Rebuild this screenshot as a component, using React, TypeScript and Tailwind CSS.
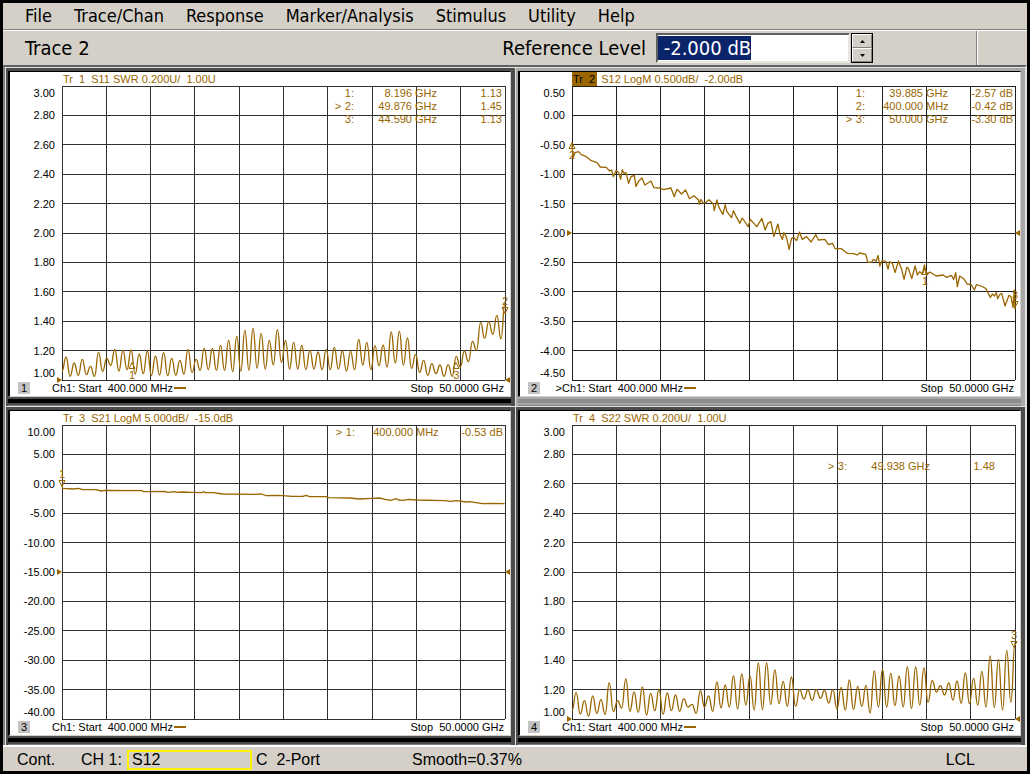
import React, { useEffect, useRef } from "react";

// plot coordinates: 10 x 10 divisions on a 1330 x 882 field
const PLOT_W = 1330;
const PLOT_H = 882;

type Readout = { active?: boolean; id: string; freq: string; unit: string; value: string };
type Pin = { id: string; x: number; y: number; below?: boolean };

type PaneData = {
  num: number;
  title: string;
  selected?: boolean;
  labels: string[];
  readouts: Readout[];
  readoutClass: string;
  pins: Pin[];
  refTop: number;
  path: string;
};

// alternating peaks and dips, as heights over the bottom line
const s11 = [
  26, 69, 11, 51, 14, 62, 16, 41, 11, 83, 26, 65, 44, 92, 27, 89, 31, 90, 18, 78, 19, 87, 14, 72, 15, 82, 13, 65, 14, 59,
  18, 92, 22, 62, 29, 95, 31, 95, 29, 104, 29, 119, 25, 131, 27, 149, 29, 155, 35, 140, 33, 119, 45, 151, 53, 119, 33,
  113, 33, 104, 31, 89, 33, 84, 31, 92, 31, 98, 33, 87, 27, 86, 31, 122, 45, 113, 31, 103, 43, 105, 39, 144, 51, 146,
  45, 126, 35, 77, 23, 59, 14, 49, 19, 45, 11, 46, 11, 71, 39, 87, 55, 116, 89, 173, 125, 175, 137, 194, 123, 231,
];

const s22 = [
  25, 79, 15, 55, 8, 69, 17, 58, 14, 109, 22, 55, 33, 120, 23, 81, 20, 96, 12, 77, 25, 88, 14, 78, 25, 72, 23, 61, 36,
  44, 17, 85, 36, 69, 23, 111, 34, 102, 36, 129, 30, 135, 42, 129, 27, 168, 28, 168, 44, 147, 46, 113, 38, 126, 38, 88,
  60, 87, 56, 88, 62, 86, 48, 88, 30, 95, 27, 117, 28, 98, 38, 101, 18, 144, 36, 149, 36, 137, 40, 129, 36, 156, 32,
  156, 42, 153, 50, 116, 81, 100, 72, 108, 57, 114, 47, 138, 46, 122, 42, 143, 36, 189, 34, 179, 27, 206, 50, 228,
];

const s12 =
  "M0 174L3 215L9 200L20 197L28 206L43 212L58 224L75 230L85 243L103 244L113 255L119 252L124 272L132 254L140 259L146 280L151 251L156 262L162 260L170 292L177 272L187 268L192 301L201 284L210 276L219 297L237 285L246 305L263 306L275 311L297 306L307 332L315 310L329 324L341 312L353 338L366 329L380 342L382 355L387 340L393 351L401 350L411 341L418 348L424 354L427 374L435 342L441 364L453 385L460 356L465 377L479 395L485 374L493 392L504 412L511 396L529 422L535 400L555 422L570 397L580 432L588 412L597 407L606 452L618 414L625 447L632 460L636 440L644 454L652 490L659 457L666 454L674 464L683 438L691 460L704 452L718 468L732 446L740 462L759 460L770 476L782 472L790 488L809 488L826 502L846 503L856 507L864 501L882 505L888 529L900 528L905 520L913 526L919 508L924 540L931 524L942 526L949 549L954 527L962 532L970 560L980 525L989 548L997 580L1005 544L1010 547L1020 578L1030 540L1037 567L1044 557L1052 564L1058 537L1064 567L1074 558L1094 570L1114 567L1124 574L1139 568L1146 580L1152 560L1157 602L1164 570L1176 578L1186 594L1198 596L1208 612L1214 596L1228 600L1242 607L1256 634L1262 624L1268 630L1274 620L1278 638L1284 626L1290 622L1300 660L1312 628L1318 632L1324 664L1328 612L1330 670";

const s21 =
  "M0 177L2 190L33 192L49 190L63 194L103 194L118 198L128 196L241 197L245 200L308 199L318 202L338 200L346 202L360 201L388 202L420 203L424 200L430 203L453 203L483 207L578 208L598 207L613 212L640 211L663 212L690 214L723 214L733 211L743 215L793 215L801 218L863 219L893 222L930 220L953 219L970 223L988 226L1003 221L1010 225L1023 226L1040 223L1063 225L1148 227L1168 229L1185 227L1213 231L1223 230L1243 233L1263 236L1290 235L1329 236";

function ripplePath(heights: number[]) {
  const step = PLOT_W / (heights.length - 1);
  let d = `M0 ${PLOT_H - heights[0]}`;
  for (let i = 1; i < heights.length; i++) {
    const x = i * step;
    const mid = x - step / 2;
    d += `C${mid} ${PLOT_H - heights[i - 1]} ${mid} ${PLOT_H - heights[i]} ${x} ${PLOT_H - heights[i]}`;
  }
  return d;
}

const swrLabels = ["3.00", "2.80", "2.60", "2.40", "2.20", "2.00", "1.80", "1.60", "1.40", "1.20", "1.00"];

const panes: PaneData[] = [
  {
    num: 1,
    title: "S11 SWR 0.200U/  1.00U",
    labels: swrLabels,
    readouts: [
      { id: "1:", freq: "8.196", unit: "GHz", value: "1.13" },
      { active: true, id: "2:", freq: "49.876", unit: "GHz", value: "1.45" },
      { id: "3:", freq: "44.590", unit: "GHz", value: "1.13" },
    ],
    readoutClass: "top-px right-[3px]",
    pins: [
      { id: "1", x: 15.8, y: 94, below: true },
      { id: "3", x: 89, y: 94, below: true },
      { id: "2", x: 100, y: 77.5 },
    ],
    refTop: 100,
    path: ripplePath(s11),
  },
  {
    num: 2,
    title: "S12 LogM 0.500dB/  -2.00dB",
    selected: true,
    labels: ["0.50", "0.00", "-0.50", "-1.00", "-1.50", "-2.00", "-2.50", "-3.00", "-3.50", "-4.00", "-4.50"],
    readouts: [
      { id: "1:", freq: "39.885", unit: "GHz", value: "-2.57 dB" },
      { id: "2:", freq: "400.000", unit: "MHz", value: "-0.42 dB" },
      { active: true, id: "3:", freq: "50.000", unit: "GHz", value: "-3.30 dB" },
    ],
    readoutClass: "top-px right-[2px]",
    pins: [
      { id: "2", x: 0, y: 19, below: true },
      { id: "1", x: 79.7, y: 62, below: true },
      { id: "3", x: 100, y: 75.5 },
    ],
    refTop: 50,
    path: s12,
  },
  {
    num: 3,
    title: "S21 LogM 5.000dB/  -15.0dB",
    labels: ["10.00", "5.00", "0.00", "-5.00", "-10.00", "-15.00", "-20.00", "-25.00", "-30.00", "-35.00", "-40.00"],
    readouts: [{ active: true, id: "1:", freq: "400.000", unit: "MHz", value: "-0.53 dB" }],
    readoutClass: "top-px right-[2px]",
    pins: [{ id: "1", x: 0, y: 21 }],
    refTop: 50,
    path: s21,
  },
  {
    num: 4,
    title: "S22 SWR 0.200U/  1.00U",
    labels: swrLabels,
    readouts: [{ active: true, id: "3:", freq: "49.938", unit: "GHz", value: "1.48" }],
    readoutClass: "top-[35px] right-5",
    pins: [{ id: "3", x: 99.8, y: 76 }],
    refTop: 100,
    path: ripplePath(s22),
  },
];

const menus = ["File", "Trace/Chan", "Response", "Marker/Analysis", "Stimulus", "Utility", "Help"];

function MarkerPin({ pin }: { pin: Pin }) {
  return (
    <div
      className={
        "absolute flex w-2 -translate-x-1/2 items-center " +
        (pin.below ? "flex-col" : "-translate-y-full flex-col-reverse")
      }
      style={{ left: `${pin.x}%`, top: `${pin.y}%` }}
    >
      <svg viewBox="0 0 8 7" className="h-[7px] w-2 shrink-0" fill="none" stroke="#996600">
        {pin.below ? <path d="M4 0.5L7 6.5H1Z" /> : <path d="M4 6.5L7 0.5H1Z" />}
      </svg>
      <span className="text-[11px] leading-3">{pin.id}</span>
    </div>
  );
}

function RefArrow({ side, top }: { side: "left" | "right"; top: number }) {
  return (
    <svg
      viewBox="0 0 5 6"
      className={"absolute h-[6px] w-[5px] -translate-y-1/2 " + (side === "left" ? "right-full" : "left-full")}
      style={{ top: `${top}%` }}
      fill="#996600"
    >
      {side === "left" ? <path d="M0 0L5 3L0 6Z" /> : <path d="M5 0L0 3L5 6Z" />}
    </svg>
  );
}

function Plot({ pane }: { pane: PaneData }) {
  const divisions = Array.from({ length: 11 }, (_, i) => i);
  return (
    <div className="relative flex min-w-0 flex-1 flex-col text-[#996600]">
      <svg
        viewBox={`0 0 ${PLOT_W} ${PLOT_H}`}
        preserveAspectRatio="none"
        className="h-0 min-h-[200px] w-full flex-1 overflow-visible"
        fill="none"
      >
        <g stroke={pane.selected ? "#202020" : "#303030"} shapeRendering="crispEdges">
          {divisions.map((i) => (
            <path
              key={i}
              d={`M${i * 133} 0V${PLOT_H}M0 ${i * 88.2}H${PLOT_W}`}
              vectorEffect="non-scaling-stroke"
            />
          ))}
        </g>
        <path
          d={pane.path}
          stroke="#996600"
          strokeWidth="1.3"
          strokeLinejoin="round"
          vectorEffect="non-scaling-stroke"
        />
      </svg>
      <table className={"absolute border-collapse text-[11px] leading-[13px] whitespace-nowrap " + pane.readoutClass}>
        <tbody>
          {pane.readouts.map((r) => (
            <tr key={r.id}>
              <td className="w-[10px] p-0">{r.active ? ">" : ""}</td>
              <td className="w-2 p-0 text-right">{r.id}</td>
              <td className="w-[58px] p-0 text-right">{r.freq}</td>
              <td className="w-[26px] p-0 pl-[3px]">{r.unit}</td>
              <td className="w-[64px] p-0 text-right">{r.value}</td>
            </tr>
          ))}
        </tbody>
      </table>
      {pane.pins.map((p) => (
        <MarkerPin key={p.id} pin={p} />
      ))}
      <RefArrow side="left" top={pane.refTop} />
      <RefArrow side="right" top={pane.refTop} />
    </div>
  );
}

function Pane({ pane }: { pane: PaneData }) {
  return (
    <section
      className={
        "flex min-w-0 flex-col border-t border-l border-t-[#e4e2dc] border-l-[#e4e2dc] pt-[3px] pr-1 pl-[2px] " +
        (pane.selected ? "bg-[#a8a8a8]" : "bg-[#4c4c4c]")
      }
    >
      <div className="flex flex-1 flex-col border-t border-r border-b border-l-2 border-t-black border-r-[#d4d0c8] border-b-[#d4d0c8] border-l-black bg-white text-[11px] text-black">
        <div className="flex h-[14px] pl-[52px] leading-[14px] whitespace-pre text-[#996600]">
          <span className={"mr-1 pr-[2px] pl-px " + (pane.selected ? "bg-[#996600] text-black" : "")}>
            {`Tr  ${pane.num}`}
          </span>
          <span>{pane.title}</span>
        </div>
        <div className="flex flex-1 pr-[5px]">
          <div className="flex w-[52px] flex-col justify-between pr-[7px] text-right leading-[14px]">
            {pane.labels.map((l, i) => (
              <div
                key={l}
                className={
                  "flex h-0 justify-end " + (i === 0 ? "items-start" : i === 10 ? "items-end" : "items-center")
                }
              >
                {l}
              </div>
            ))}
          </div>
          <Plot pane={pane} />
        </div>
        <div className="flex h-4 items-center pr-[6px] pl-2 whitespace-pre">
          <span className="h-3 w-3 bg-[#c4c4c4] text-center leading-3">{pane.num}</span>
          <span className="w-[22px] text-right">{pane.selected ? ">" : ""}</span>
          <span>{"Ch1: Start  400.000 MHz"}</span>
          <span className="ml-px h-[2px] w-3 bg-[#996600]" />
          <span className="ml-auto">{"Stop  50.0000 GHz"}</span>
        </div>
      </div>
      <div className="h-[9px] border-b border-b-[#808080] pt-[2px]">
        <div className={"h-1 " + (pane.selected ? "bg-[#8c8c8c]" : "bg-black")} />
      </div>
    </section>
  );
}

function SpinButton({ up }: { up?: boolean }) {
  return (
    <button
      type="button"
      aria-label={up ? "Increase" : "Decrease"}
      className="flex flex-1 items-center justify-center border border-t-white border-r-[#808080] border-b-[#808080] border-l-white bg-[#d4d0c8]"
    >
      <svg viewBox="0 0 5 3" className="h-[3px] w-[5px]" fill="#000">
        {up ? <path d="M2.5 0L5 3H0Z" /> : <path d="M0 0H5L2.5 3Z" />}
      </svg>
    </button>
  );
}

export default function App() {
  const levelRef = useRef<HTMLInputElement>(null);

  useEffect(() => {
    levelRef.current?.focus();
    levelRef.current?.select();
  }, []);

  return (
    <div className="flex min-h-screen flex-col bg-black p-[3px] font-['Liberation_Sans',Arial,sans-serif] text-black">
      <nav className="flex h-[27px] items-center gap-[22px] border-b border-b-[#808080] bg-[#d4d0c8] pl-[22px] font-['DejaVu_Sans_Condensed','DejaVu_Sans',sans-serif] text-[18px]">
        {menus.map((m) => (
          <button key={m} type="button" className="leading-6">
            {m}
          </button>
        ))}
      </nav>

      <div className="flex h-[35px] items-center border-t border-t-white bg-[#d4d0c8] pl-[22px] font-['DejaVu_Sans_Condensed','DejaVu_Sans',sans-serif] text-[20px]">
        <span>Trace 2</span>
        <label htmlFor="ref-level" className="mr-[10px] ml-auto">
          Reference Level
        </label>
        <input
          id="ref-level"
          ref={levelRef}
          defaultValue=" -2.000 dB"
          className="h-[30px] w-[194px] border-2 border-t-[#606060] border-r-[#e8e6e0] border-b-[#e8e6e0] border-l-[#606060] bg-white leading-6 caret-transparent outline-none selection:bg-[#0a246a] selection:text-white"
        />
        <div className="ml-px flex h-[30px] w-[22px] flex-col border border-black">
          <SpinButton up />
          <SpinButton />
        </div>
        <div className="ml-[103px] w-[51px] self-stretch border-l border-l-[#808080]">
          <div className="h-full border-l border-l-white" />
        </div>
      </div>

      <main className="grid flex-1 auto-rows-fr grid-cols-2 border-t-2 border-r-2 border-l-2 border-t-[#606060] border-r-[#e4e2dc] border-l-[#808080] bg-[#4c4c4c]">
        {panes.map((p) => (
          <Pane key={p.num} pane={p} />
        ))}
      </main>

      <footer className="flex h-[26px] items-center border-t-2 border-t-white bg-[#d4d0c8] pt-px pr-[52px] pl-[14px] text-[16px] leading-5 whitespace-pre">
        <span className="w-16">Cont.</span>
        <span className="w-[46px]">CH 1:</span>
        <span className="h-5 w-[125px] border-2 border-[#fff200] pl-[3px] leading-4">S12</span>
        <span className="ml-1 w-[156px]">{"C  2-Port"}</span>
        <span>Smooth=0.37%</span>
        <span className="ml-auto">LCL</span>
      </footer>
    </div>
  );
}
